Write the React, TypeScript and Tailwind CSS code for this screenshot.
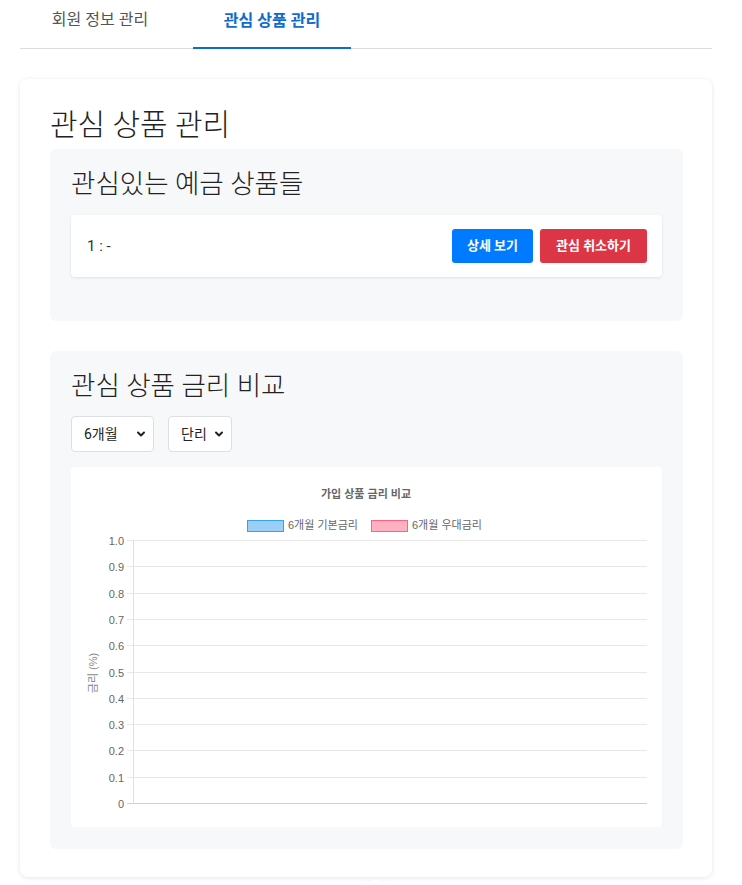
import { ChevronDown } from 'lucide-react'

const FONT = "font-['Roboto','Noto_Sans_CJK_KR',sans-serif]"
const CHART_FONT = "'Liberation Sans', 'Noto Sans CJK KR', sans-serif"

const ticks = [1.0, 0.9, 0.8, 0.7, 0.6, 0.5, 0.4, 0.3, 0.2, 0.1, 0]

// y position of tick value inside the chart svg
const yOf = (v: number) => 336 - v * 263

const RateChart = () => (
  <svg width="591" height="360" viewBox="0 0 591 360" className="block">
    <text x="295" y="31" textAnchor="middle" fontFamily={CHART_FONT} fontSize="11" fontWeight="bold" fill="#666">
      가입 상품 금리 비교
    </text>

    {/* legend */}
    <rect x="176.5" y="53.5" width="36" height="11" fill="#9ad0f5" stroke="#36a2eb" strokeWidth="1" />
    <text x="217" y="62" fontFamily={CHART_FONT} fontSize="11" fill="#666">6개월 기본금리</text>
    <rect x="300.5" y="53.5" width="36" height="11" fill="#ffb1c1" stroke="#ff6384" strokeWidth="1" />
    <text x="341" y="62" fontFamily={CHART_FONT} fontSize="11" fill="#666">6개월 우대금리</text>

    {/* grid + ticks */}
    {ticks.map((t) => {
      const y = Math.round(yOf(t)) + 0.5
      const label = t === 0 ? '0' : t.toFixed(1)
      return (
        <g key={t}>
          <line x1="56" x2="576" y1={y} y2={y} stroke={t === 0 ? '#d0d0d0' : '#e8e8e8'} strokeWidth="1" />
          <text x="53" y={y + 4} textAnchor="end" fontFamily={CHART_FONT} fontSize="11" fill="#666">
            {label}
          </text>
        </g>
      )
    })}
    <line x1="62.5" x2="62.5" y1="73" y2="337" stroke="#e0e0e0" strokeWidth="1" />

    <text
      x="0"
      y="0"
      transform="translate(26 206) rotate(-90)"
      textAnchor="middle"
      fontFamily={CHART_FONT}
      fontSize="11"
      fill="#888"
    >
      금리 (%)
    </text>
  </svg>
)

const Select = ({ label, width }: { label: string; width: string }) => (
  <div
    className={`${width} shrink-0 whitespace-nowrap h-9 flex items-center justify-between pl-3 pr-[6px] bg-white border border-[#dcdfe3] rounded text-sm text-[#222]`}
  >
    <span>{label}</span>
    <ChevronDown size={12} strokeWidth={4} className="text-[#222]" />
  </div>
)

export default function App() {
  return (
    <div className={`${FONT} relative min-h-[885px] bg-white pl-5 pr-[30px] text-[#212529]`}>
      {/* tabs */}
      <div className="flex border-b border-[#dcdcdc]">
        <button className="w-[160px] pt-2 pb-4 text-base text-[#555]">회원 정보 관리</button>
        <button className="ml-[13px] w-[158px] pt-2 pb-[14px] text-base font-bold text-[#0f6ccf] border-b-2 border-[#0f6ccf] -mb-px">
          관심 상품 관리
        </button>
      </div>

      {/* main card */}
      <div className="mt-[30px] bg-white rounded-lg shadow-[0_1px_5px_rgba(0,0,0,0.1)] pt-[26px] pb-[28px] pl-[30px] pr-[29px]">
        <h1 className="text-[30px] leading-[40px] font-light text-[#222] mb-[4px]">관심 상품 관리</h1>

        <section className="bg-[#f7f8fa] rounded-md px-[21px] pt-[19px] pb-[44px]">
          <h2 className="text-[26.5px] leading-[32px] font-light text-[#222] mb-[15px]">관심있는 예금 상품들</h2>
          <div className="bg-white rounded shadow-[0_1px_3px_rgba(0,0,0,0.1)] flex items-center justify-between pl-4 pr-[15px] h-[62px]">
            <span className="text-[15px] text-[#333]">1 : -</span>
            <div className="flex gap-[7px]">
              <button className="h-[34px] px-[15px] rounded-[3px] bg-[#007bff] text-white text-[13px] font-bold">
                상세 보기
              </button>
              <button className="h-[34px] px-4 rounded-[3px] bg-[#dc3545] text-white text-[13px] font-bold">
                관심 취소하기
              </button>
            </div>
          </div>
        </section>

        <section className="mt-[30px] bg-[#f7f8fa] rounded-md px-[21px] pt-[19px] pb-[22px]">
          <h2 className="text-[26.5px] leading-[32px] font-light text-[#222] mb-[14px]">관심 상품 금리 비교</h2>
          <div className="flex gap-[14px] mb-[15px]">
            <Select label="6개월" width="w-[83px]" />
            <Select label="단리" width="w-[64px]" />
          </div>
          <div className="bg-white rounded h-[360px]">
            <RateChart />
          </div>
        </section>
      </div>

      {/* faint scroll-to-top circle peeking at the bottom */}
      <div className="absolute left-[360px] top-[880px] w-[30px] h-[30px] rounded-full bg-white shadow-[0_0_2px_rgba(0,0,0,0.05)]" />
    </div>
  )
}
